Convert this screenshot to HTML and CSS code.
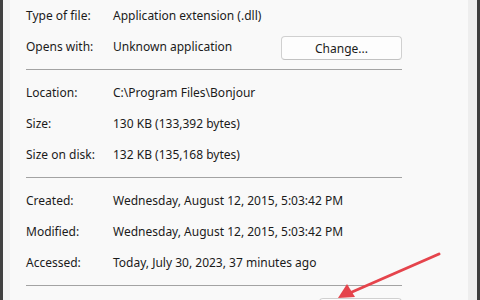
FILE: index.html
```html
<!DOCTYPE html>
<html lang="en">
<head>
  <meta charset="UTF-8">
  <title>Bonjour Properties</title>
  <link rel="stylesheet" href="styles.css">
</head>
<body>
  <div class="edge-left"></div>
  <div class="panel">
    <div class="row"><span class="label">Type of file:</span><span class="value">Application extension (.dll)</span></div>
    <div class="row">
      <span class="label">Opens with:</span><span class="value">Unknown application</span>
      <button class="btn change">Change...</button>
    </div>
    <hr class="sep">
    <div class="row"><span class="label">Location:</span><span class="value">C:\Program Files\Bonjour</span></div>
    <div class="row"><span class="label">Size:</span><span class="value">130 KB (133,392 bytes)</span></div>
    <div class="row"><span class="label">Size on disk:</span><span class="value">132 KB (135,168 bytes)</span></div>
    <hr class="sep">
    <div class="row"><span class="label">Created:</span><span class="value">Wednesday, August 12, 2015, 5:03:42 PM</span></div>
    <div class="row"><span class="label">Modified:</span><span class="value">Wednesday, August 12, 2015, 5:03:42 PM</span></div>
    <div class="row"><span class="label">Accessed:</span><span class="value">Today, July 30, 2023, 37 minutes ago</span></div>
    <hr class="sep">
    <div class="bottom">
      <!-- only the top edge of this button is in view -->
      <button class="btn advanced"></button>
    </div>
  </div>
  <div class="edge-right"></div>

  <!-- annotation arrow drawn over the dialog -->
  <svg class="arrow" width="480" height="300" viewBox="0 0 480 300">
    <line x1="439" y1="254" x2="352" y2="292" stroke="#e5444c" stroke-width="3" stroke-linecap="round"/>
    <polygon points="338,298 347,284 355,297" fill="#e5444c"/>
  </svg>
</body>
</html>
```

FILE: styles.css
```css
body {
  margin: 0;
  width: 480px;
  height: 300px;
  overflow: hidden;
  display: flex;
  background: #f9f9f9;
  font-family: "Noto Sans", "Liberation Sans", Arial, sans-serif;
  font-size: 12px;
  color: #1b1b1b;
}

.edge-left {
  width: 7px;
  flex: none;
  background: #f0f0f0;
  border-left: 3px solid #3d3d3d;
}

.edge-right {
  width: 9px;
  flex: none;
  background: #eeeeee;
  border-right: 3px solid #3d3d3d;
}

.panel {
  flex: 1;
  padding: 0 66px 0 16px;
}

.row {
  height: 31px;
  display: flex;
  align-items: center;
}

.label {
  width: 87px;
  flex: none;
}

.value {
  white-space: nowrap;
}

.sep {
  margin: 7px 0 7px 0;
  border: none;
  border-top: 1px solid #a3a3a3;
  height: 0;
}

.btn {
  font-family: inherit;
  font-size: 12px;
  color: #1b1b1b;
  background: #fdfdfd;
  border: 1px solid #d0d0d0;
  border-bottom-color: #c2c2c2;
  border-radius: 4px;
  height: 24px;
  padding: 0;
}

.change {
  width: 121px;
  margin-left: auto;
  margin-top: 3px;
}

.bottom {
  display: flex;
  justify-content: flex-end;
  padding-top: 5px;
}

.advanced {
  width: 83px;
}

.arrow {
  position: absolute;
  left: 0;
  top: 0;
}
```
